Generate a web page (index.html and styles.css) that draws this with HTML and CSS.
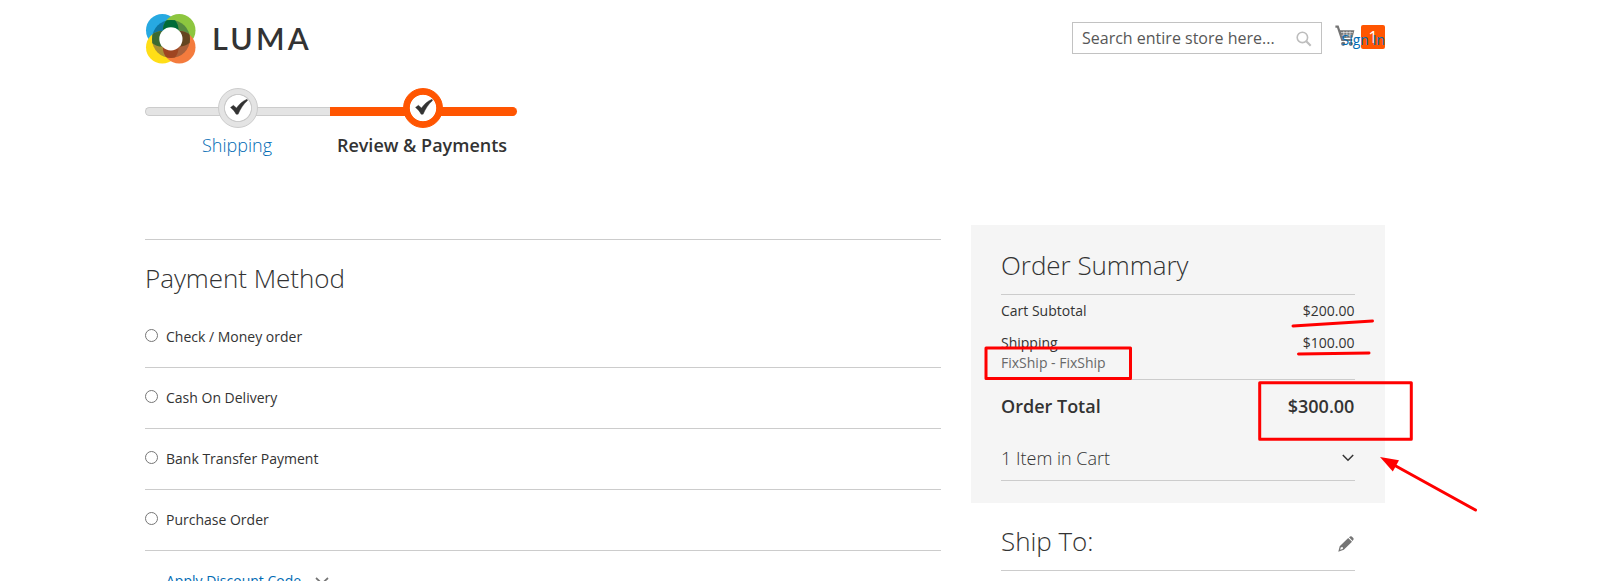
FILE: index.html
```html
<!DOCTYPE html>
<html lang="en">
<head>
<meta charset="utf-8">
<title>Checkout</title>
<link rel="stylesheet" href="styles.css">
</head>
<body>
<div class="page">
  <header class="header">
    <a class="logo">
      <svg class="logo-mark" width="52" height="52" viewBox="0 0 52 52">
        <defs>
          <clipPath id="ring"><circle cx="26" cy="26" r="19"/></clipPath>
          <clipPath id="tl"><circle cx="17.3" cy="17.3" r="16.3"/></clipPath>
          <clipPath id="tr"><circle cx="34.2" cy="17.3" r="16.3"/></clipPath>
          <clipPath id="bl"><circle cx="17.3" cy="34.2" r="16.3"/></clipPath>
        </defs>
        <circle cx="17.3" cy="17.3" r="16.3" fill="#27a9e1"/>
        <circle cx="34.2" cy="17.3" r="16.3" fill="#8dc63f"/>
        <circle cx="17.3" cy="34.2" r="16.3" fill="#ffde17"/>
        <circle cx="34.2" cy="34.2" r="16.3" fill="#f47b3d"/>
        <g clip-path="url(#ring)">
          <circle cx="17.3" cy="17.3" r="16.3" fill="#0e76a0"/>
          <circle cx="34.2" cy="17.3" r="16.3" fill="#568a40"/>
          <circle cx="17.3" cy="34.2" r="16.3" fill="#a99136"/>
          <circle cx="34.2" cy="34.2" r="16.3" fill="#a9603a"/>
          <g clip-path="url(#tl)"><circle cx="34.2" cy="17.3" r="16.3" fill="#006b38"/><circle cx="17.3" cy="34.2" r="16.3" fill="#3b6a32"/></g>
          <g clip-path="url(#tr)"><circle cx="34.2" cy="34.2" r="16.3" fill="#64451f"/></g>
          <g clip-path="url(#bl)"><circle cx="34.2" cy="34.2" r="16.3" fill="#9f4521"/></g>
        </g>
        <circle cx="25.9" cy="25.9" r="11.6" fill="#fff"/>
      </svg>
      <span class="logo-text">LUMA</span>
    </a>
    <div class="tools">
      <div class="search">
        <span>Search entire store here...</span>
        <svg width="16" height="16" viewBox="0 0 16 16" fill="none" stroke="#bdbdbd"><circle cx="6.4" cy="6.4" r="5.2" stroke-width="1.6"/><path d="M10.3 10.3L14.7 14.7" stroke-width="2.1"/></svg>
      </div>
      <div class="minicart">
        <svg width="20" height="22" viewBox="0 0 20 22"><path d="M.4 1.6H2.8L7.2 15H17.2" fill="none" stroke="#757575" stroke-width="2.2"/><path d="M4.2 5.2H19.4L17.6 12.6L6.6 13.2Z" fill="#757575"/><path d="M6 7.6H18M6.6 10.2H17.3M8.8 6.2V12.4M11.9 6.2V12.4M15 6.2V12" stroke="#fff" stroke-width=".6"/><circle cx="8.2" cy="18.8" r="2.1" fill="#757575"/><circle cx="15.8" cy="18.8" r="2.1" fill="#757575"/></svg>
        <span class="count">1</span>
        <a class="signin">Sign In</a>
      </div>
    </div>
  </header>

  <ol class="progress">
    <li class="step">
      <div class="bar"><i class="dot"><svg width="18" height="16" viewBox="0 0 18 16"><path d="M.5 8.4L3.4 6.3L6.5 9C9 5.4 12.2 2.2 17 .2L17.6 1.5C13.4 5 10.8 9.4 8.1 15.2H6.1C4.6 12.2 2.8 10.2 .5 8.4Z" fill="#333" stroke="#333" stroke-width=".4"/></svg></i></div>
      <span class="label">Shipping</span>
    </li>
    <li class="step active">
      <div class="bar"><i class="dot"><svg width="18" height="16" viewBox="0 0 18 16"><path d="M.5 8.4L3.4 6.3L6.5 9C9 5.4 12.2 2.2 17 .2L17.6 1.5C13.4 5 10.8 9.4 8.1 15.2H6.1C4.6 12.2 2.8 10.2 .5 8.4Z" fill="#333" stroke="#333" stroke-width=".4"/></svg></i></div>
      <span class="label">Review &amp; Payments</span>
    </li>
  </ol>

  <div class="columns">
    <main class="payment">
      <h2 class="title">Payment Method</h2>
      <label class="method"><i class="radio"></i>Check / Money order</label>
      <label class="method"><i class="radio"></i>Cash On Delivery</label>
      <label class="method"><i class="radio"></i>Bank Transfer Payment</label>
      <label class="method"><i class="radio"></i>Purchase Order</label>
      <a class="discount">Apply Discount Code
        <svg width="14" height="8" viewBox="0 0 14 8"><path d="M1 1L7 6.5L13 1" fill="none" stroke="#757575" stroke-width="1.7"/></svg></a>
    </main>
    <aside class="side">
      <section class="summary">
        <h2 class="title">Order Summary</h2>
        <div class="row"><span>Cart Subtotal</span><span>$200.00</span></div>
        <div class="row"><span>Shipping<small class="carrier">FixShip - FixShip</small></span><span>$100.00</span></div>
        <div class="total"><span>Order Total</span><span>$300.00</span></div>
        <div class="items"><span>1 Item in Cart</span>
          <svg width="12" height="8" viewBox="0 0 12 8"><path d="M.8 1L6 6.2L11.2 1" fill="none" stroke="#333" stroke-width="1.5"/></svg></div>
      </section>
      <section class="shipto">
        <h2 class="title">Ship To:</h2>
        <svg class="pencil" width="16" height="16" viewBox="0 0 16 16"><path fill="#757575" fill-rule="evenodd" d="M.3 15.7L1.7 10.3L10.2 2L14 5.8L5.8 13.8ZM2.9 11.2L2.1 13.8L4.8 12.9L5 11.2Z"/><path d="M11 1.3L12.1.4Q13-.2 13.8.6L15.3 2.1Q16 3 15.3 3.8L14.6 4.9Z" fill="#757575"/></svg>
      </section>
    </aside>
  </div>
</div>
<svg class="marks" width="1621" height="581" viewBox="0 0 1621 581" fill="none" stroke="#f00" stroke-width="3" stroke-linecap="round" stroke-linejoin="round">
  <rect x="986" y="348" width="144.5" height="30.5"/>
  <rect x="1259.7" y="382.8" width="151.6" height="56.5"/>
  <path d="M1293 326L1372.5 321M1298.5 354L1369 353M1394 465L1475.5 510"/>
  <path d="M1380 457L1399 460.3L1392.8 471.5Z" fill="#f00" stroke="none"/>
</svg>
</body>
</html>
```
FILE: styles.css
```css
* { box-sizing: border-box; }
html, body { margin: 0; height: 581px; overflow: hidden; }
body {
  position: relative;
  background: #fff;
  color: #333;
  font: 14px/20px "Open Sans", "Noto Sans", sans-serif;
}
.page { width: 1240px; margin-left: 145px; }
svg { display: block; flex: none; }

.header { display: flex; justify-content: space-between; height: 88px; padding-top: 13px; }
.logo { display: flex; align-items: flex-start; }
.logo-text {
  margin: 7px 0 0 15px;
  font: 600 30.5px/36px Lato, sans-serif;
  letter-spacing: 3.2px;
}
.tools { display: flex; padding-top: 9px; }
.search {
  display: flex;
  justify-content: space-between;
  width: 250px;
  height: 32px;
  padding: 4px 9px 0 9px;
  border: 1px solid #c2c2c2;
  color: #575757;
  font-size: 16px;
  line-height: 22px;
}
.search svg { margin-top: 4px; }
.minicart { position: relative; display: flex; width: 63px; padding: 3px 0 0 13px; }
.count {
  width: 24px;
  height: 24px;
  margin-left: 6px;
  border-radius: 2px;
  background: #ff5501;
  color: #fff;
  text-align: center;
  font-size: 16px;
  line-height: 24px;
}
.signin { position: absolute; right: 0; top: 8px; color: #006bb4; white-space: nowrap; }

.progress { display: flex; width: 372px; height: 137px; margin: 0; padding: 0; list-style: none; }
.step { flex: 0 0 185px; display: flex; flex-direction: column; align-items: center; }
.step.active { flex-basis: 187px; }
.bar {
  display: flex;
  align-items: center;
  justify-content: center;
  width: 100%;
  height: 9px;
  margin-top: 19px;
  border: solid #ccc;
  border-width: 1px 0 1px 1px;
  border-radius: 5px 0 0 5px;
  background: #e4e4e4;
}
.dot {
  display: flex;
  flex: none;
  align-items: center;
  justify-content: center;
  width: 40px;
  height: 40px;
  margin-top: -7px;
  border: 1px solid #ccc;
  border-radius: 50%;
  background: radial-gradient(circle, #fff 12.6px, #ccc 13.2px, #ccc 13.8px, #e4e4e4 14.4px);
}
.dot svg { margin: -3px 0 0 1px; }
.active .bar { padding-right: 2px; border-color: #ff5501; background: #ff5501; border-radius: 0 5px 5px 0; }
.active .dot { border-color: #ff5501; background: radial-gradient(circle, #fff 12.8px, #ff5501 13.6px); }
.label { margin: 16px 1px 0 0; color: #006bb4; font-size: 18px; font-weight: 300; line-height: 26px; }
.active .label { margin-right: 3px; color: #333; font-weight: 600; }

.columns { display: flex; align-items: flex-start; justify-content: space-between; }
.payment { width: 796px; margin-top: 14px; border-top: 1px solid #ccc; }
.title { margin: 0; font-size: 26px; font-weight: 300; line-height: 29px; letter-spacing: -.04px; }
.payment .title { padding: 24px 0 14px; }
.method { display: flex; height: 61px; padding-top: 20px; border-bottom: 1px solid #ccc; }
.radio { width: 13px; height: 13px; margin: 2px 8px 0 0; border: 1px solid #767676; border-radius: 50%; }
.discount { display: flex; gap: 14px; padding: 20px 0 0 21px; color: #006bb4; }
.discount svg { margin-top: 6px; }

.side { width: 414px; }
.summary { height: 278px; padding: 26px 30px 0; background: #f5f5f5; }
.summary .title { padding-bottom: 14px; border-bottom: 1px solid #ccc; }
.row { display: flex; justify-content: space-between; padding: 6px 0; }
.carrier { display: block; color: #686868; font-size: 14px; }
.total {
  display: flex;
  justify-content: space-between;
  padding: 13px 0 26px;
  border-top: 1px solid #ccc;
  font-size: 18px;
  font-weight: 600;
  line-height: 26px;
}
.row > :last-child, .total > :last-child { padding-right: .6px; }
.items {
  display: flex;
  justify-content: space-between;
  padding-bottom: 9px;
  border-bottom: 1px solid #ccc;
  font-size: 18px;
  font-weight: 300;
  line-height: 26px;
}
.items svg { margin: 9px 1px 0 0; }
.shipto {
  display: flex;
  justify-content: space-between;
  height: 68px;
  margin: 0 30px;
  padding-top: 24px;
  border-bottom: 1px solid #ccc;
}
.pencil { margin: 9px 1px 0 0; }
.marks { position: absolute; top: 0; left: 0; }
```
